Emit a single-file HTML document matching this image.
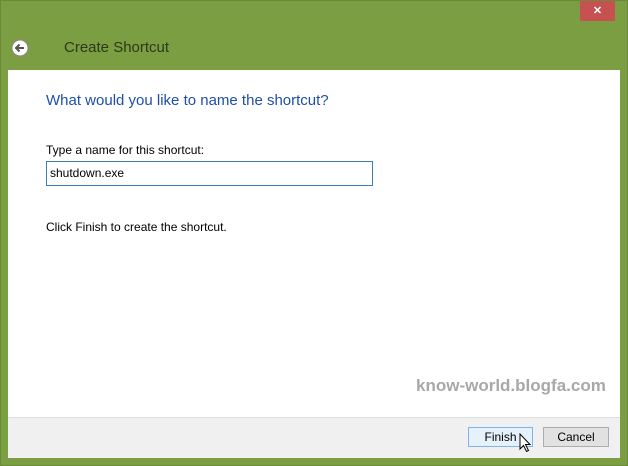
<!DOCTYPE html>
<html><head><style>
body{margin:0;width:628px;height:466px;background:#7b9e42;position:relative;overflow:hidden;font-family:"Liberation Sans",sans-serif;}
.abs{position:absolute}
</style></head><body>
<div class="abs" style="left:0;top:0;width:626px;height:464px;border:1px solid #6a8a38"></div>
<div class="abs" style="left:580px;top:1px;width:35px;height:20px;background:#c75050;color:#fff;font-size:11px;font-weight:bold;text-align:center;line-height:20px">✕</div>
<svg class="abs" style="left:11px;top:39px" width="18" height="18" viewBox="0 0 18 18"><circle cx="9" cy="9" r="8" fill="#fff" stroke="#888" stroke-width="1"/><path d="M13 9H5M8.5 5.5L5 9l3.5 3.5" stroke="#555" stroke-width="2" fill="none"/></svg>
<div class="abs" style="left:64px;top:39px;font-size:15px;color:#2a3a18">Create Shortcut</div>
<div class="abs" style="left:8px;top:70px;width:612px;height:347px;background:#fff"></div>
<div class="abs" style="left:8px;top:417px;width:612px;height:40px;background:#f0f0f0;border-top:1px solid #dfdfdf"></div>
<div class="abs" style="left:46px;top:92px;font-size:15px;color:#1e4fa8">What would you like to name the shortcut?</div>
<div class="abs" style="left:46px;top:143px;font-size:12px;color:#000">Type a name for this shortcut:</div>
<div class="abs" style="left:46px;top:161px;width:327px;height:25px;border:1px solid #3c7fb1;box-sizing:border-box;font-size:12px;padding:4px 0 0 3px">shutdown.exe</div>
<div class="abs" style="left:46px;top:220px;font-size:12px;color:#000">Click Finish to create the shortcut.</div>
<div class="abs" style="left:416px;top:376px;font-size:17px;font-weight:bold;color:#a8a8a8">know-world.blogfa.com</div>
<div class="abs" style="left:468px;top:427px;width:65px;height:20px;box-sizing:border-box;border:1px solid #7eb4ea;background:#e5f1fb;font-size:12px;text-align:center;line-height:18px">Finish</div>
<div class="abs" style="left:543px;top:427px;width:66px;height:20px;box-sizing:border-box;border:1px solid #adadad;background:#e1e1e1;font-size:12px;text-align:center;line-height:18px">Cancel</div>
<svg class="abs" style="left:519px;top:433px" width="14" height="20" viewBox="0 0 14 20"><path d="M1 1v15l3.5-3.5 3 6 2-1-3-6H11z" fill="#fff" stroke="#000" stroke-width="1"/></svg>
</body></html>
